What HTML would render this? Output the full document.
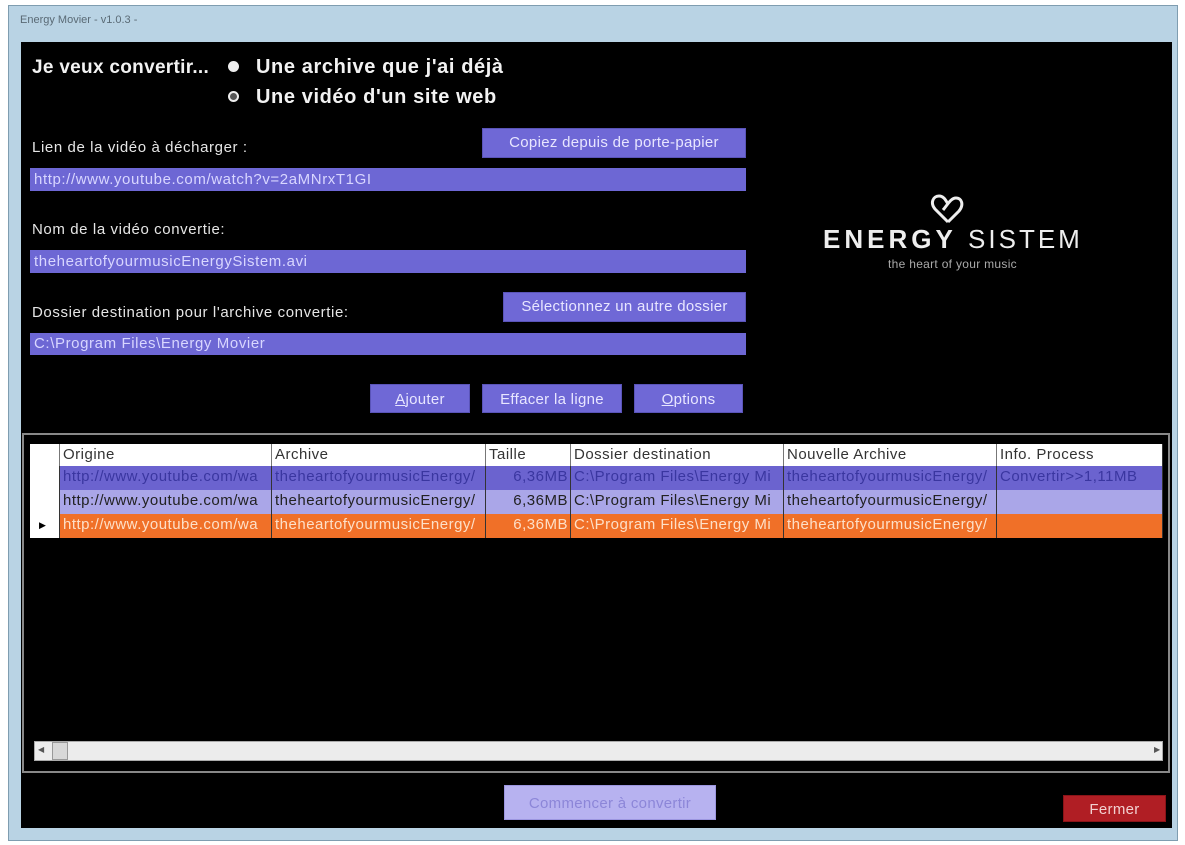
<!DOCTYPE html>
<html><head><meta charset="utf-8"><style>
body{margin:0;width:1185px;height:845px;background:#fff;position:relative;overflow:hidden;font-family:"Liberation Sans",sans-serif}
.a{position:absolute;white-space:nowrap}
.btn{position:absolute;background:#6f68d6;color:#e8e6ff;font-size:15px;text-align:center;box-sizing:border-box;border:1px solid #5a54b8;white-space:nowrap;letter-spacing:0.3px}
.fld{position:absolute;background:#6d67d4;color:#d8d6ff;font-size:15px;padding-left:4px;box-sizing:border-box;line-height:23px;white-space:nowrap;overflow:hidden;letter-spacing:0.6px}
.lbl{position:absolute;color:#e6e6e6;font-size:15px;white-space:nowrap;letter-spacing:0.6px}
.row{position:absolute;left:30px;width:1133px;height:24px;font-size:15px;letter-spacing:0.5px}
.row div{position:absolute;top:0;height:24px;line-height:22px;box-sizing:border-box;border-right:1px solid #333;padding-left:3px;white-space:nowrap;overflow:hidden}
</style></head><body>
<div class="a" style="left:8px;top:5px;width:1170px;height:836px;background:#b9d3e4;border:1px solid #7f9db0;box-sizing:border-box"></div>
<div class="a" style="left:20px;top:14px;font-size:11px;color:#5a6a75">Energy Movier - v1.0.3 -</div>
<div class="a" style="left:21px;top:42px;width:1151px;height:786px;background:#000"></div>
<div class="a" style="left:32px;top:57px;color:#f2f2f2;font-weight:bold;font-size:19px;letter-spacing:0.3px">Je veux convertir...</div>
<div class="a" style="left:228px;top:61px;width:11px;height:11px;border-radius:50%;background:#eee"></div>
<div class="a" style="left:256px;top:56px;color:#f2f2f2;font-weight:bold;font-size:20px;letter-spacing:0.6px">Une archive que j'ai déjà</div>
<div class="a" style="left:228px;top:91px;width:7px;height:7px;border-radius:50%;border:2px solid #eee;background:#555"></div>
<div class="a" style="left:256px;top:86px;color:#f2f2f2;font-weight:bold;font-size:20px;letter-spacing:0.6px">Une vidéo d'un site web</div>
<div class="lbl" style="left:32px;top:139px">Lien de la vidéo à décharger :</div>
<div class="btn" style="left:482px;top:128px;width:264px;height:30px;line-height:28px">Copiez depuis de porte-papier</div>
<div class="fld" style="left:30px;top:168px;width:716px;height:23px">http://www.youtube.com/watch?v=2aMNrxT1GI</div>
<div class="lbl" style="left:32px;top:221px">Nom de la vidéo convertie:</div>
<div class="fld" style="left:30px;top:250px;width:716px;height:23px">theheartofyourmusicEnergySistem.avi</div>
<div class="lbl" style="left:32px;top:304px">Dossier destination pour l'archive convertie:</div>
<div class="btn" style="left:503px;top:292px;width:243px;height:30px;line-height:28px">Sélectionnez un autre dossier</div>
<div class="fld" style="left:30px;top:333px;width:716px;height:22px;line-height:21px">C:\Program Files\Energy Movier</div>
<div class="btn" style="left:370px;top:384px;width:100px;height:29px;line-height:29px"><u>A</u>jouter</div>
<div class="btn" style="left:482px;top:384px;width:140px;height:29px;line-height:29px">Effacer la ligne</div>
<div class="btn" style="left:634px;top:384px;width:109px;height:29px;line-height:29px"><u>O</u>ptions</div>
<svg class="a" style="left:930px;top:192px" width="36" height="34" viewBox="0 0 36 34"><path d="M18 30 L5 17 C0 11 3 4 9 4 C14 4 16 9 18 12 M18 30 L29 19 C34 13 32 6 26 6 C21 6 18 12 13 18" fill="none" stroke="#eee" stroke-width="3"/></svg>
<div class="a" style="left:823px;top:224px;color:#eee;font-size:26px;letter-spacing:4px;"><span style="font-weight:bold">ENERGY</span> <span style="letter-spacing:3px">SISTEM</span></div>
<div class="a" style="left:888px;top:257px;color:#aaa;font-size:12px;letter-spacing:0.3px">the heart of your music</div>
<div class="a" style="left:22px;top:433px;width:1148px;height:340px;border:2px solid #888;box-sizing:border-box"></div>
<div class="row" style="top:444px;height:22px;background:#fff;color:#333">
<div style="left:0;width:30px;height:22px;border-right:1px solid #777"></div>
<div style="left:30px;width:212px;height:22px;border-right:1px solid #777">Origine</div>
<div style="left:242px;width:214px;height:22px;border-right:1px solid #777">Archive</div>
<div style="left:456px;width:85px;height:22px;border-right:1px solid #777">Taille</div>
<div style="left:541px;width:213px;height:22px;border-right:1px solid #777">Dossier destination</div>
<div style="left:754px;width:213px;height:22px;border-right:1px solid #777">Nouvelle Archive</div>
<div style="left:967px;width:166px;height:22px">Info. Process</div></div>
<div class="row" style="top:466px;background:#6b63cf;color:#3a36a0">
<div style="left:0;width:30px;background:#fff"></div>
<div style="left:30px;width:212px">http://www.youtube.com/wa</div>
<div style="left:242px;width:214px">theheartofyourmusicEnergy/</div>
<div style="left:456px;width:85px;text-align:right;padding-right:2px">6,36MB</div>
<div style="left:541px;width:213px">C:\Program Files\Energy Mi</div>
<div style="left:754px;width:213px">theheartofyourmusicEnergy/</div>
<div style="left:967px;width:166px">Convertir&gt;&gt;1,11MB</div></div>
<div class="row" style="top:490px;background:#aaa6e8;color:#222">
<div style="left:0;width:30px;background:#fff"></div>
<div style="left:30px;width:212px">http://www.youtube.com/wa</div>
<div style="left:242px;width:214px">theheartofyourmusicEnergy/</div>
<div style="left:456px;width:85px;text-align:right;padding-right:2px">6,36MB</div>
<div style="left:541px;width:213px">C:\Program Files\Energy Mi</div>
<div style="left:754px;width:213px">theheartofyourmusicEnergy/</div>
<div style="left:967px;width:166px"></div></div>
<div class="row" style="top:514px;background:#f07028;color:#fde0c8">
<div style="left:0;width:30px;background:#fff;color:#000;font-size:9px;padding-left:9px">▶</div>
<div style="left:30px;width:212px">http://www.youtube.com/wa</div>
<div style="left:242px;width:214px">theheartofyourmusicEnergy/</div>
<div style="left:456px;width:85px;text-align:right;padding-right:2px">6,36MB</div>
<div style="left:541px;width:213px">C:\Program Files\Energy Mi</div>
<div style="left:754px;width:213px">theheartofyourmusicEnergy/</div>
<div style="left:967px;width:166px"></div></div>
<div class="a" style="left:34px;top:741px;width:1129px;height:20px;background:#ececec;border:1px solid #aaa;box-sizing:border-box"></div>
<div class="a" style="left:38px;top:745px;font-size:8px;color:#555">◀</div>
<div class="a" style="left:1154px;top:745px;font-size:8px;color:#555">▶</div>
<div class="a" style="left:52px;top:742px;width:16px;height:18px;background:#d8d8d8;border:1px solid #999;box-sizing:border-box"></div>
<div class="btn" style="left:504px;top:785px;width:212px;height:35px;line-height:35px;background:#b7b2f0;color:#8c86d8;border-color:#9c96e0">Commencer à convertir</div>
<div class="btn" style="left:1063px;top:795px;width:103px;height:27px;line-height:27px;background:#b01e24;border-color:#8a1418;color:#f2d0d0">Fermer</div>
</body></html>
